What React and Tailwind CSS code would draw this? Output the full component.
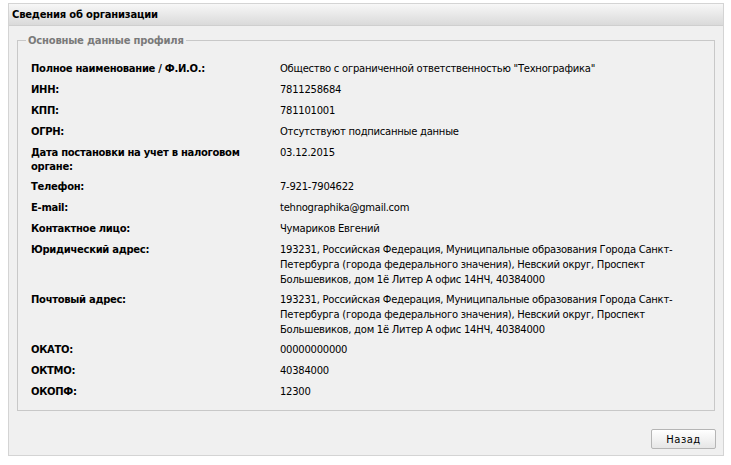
export default function App() {
  const rows = [
    ["Полное наименование / Ф.И.О.:", ["Общество с ограниченной ответственностью \"Технографика\""]],
    ["ИНН:", ["7811258684"]],
    ["КПП:", ["781101001"]],
    ["ОГРН:", ["Отсутствуют подписанные данные"]],
    ["Дата постановки на учет в налоговом органе:", ["03.12.2015"]],
    ["Телефон:", ["7-921-7904622"]],
    ["E-mail:", ["tehnographika@gmail.com"]],
    ["Контактное лицо:", ["Чумариков Евгений"]],
    ["Юридический адрес:", ["193231, Российская Федерация, Муниципальные образования Города Санкт-", "Петербурга (города федерального значения), Невский округ, Проспект", "Большевиков, дом 1ё Литер А офис 14НЧ, 40384000"]],
    ["Почтовый адрес:", ["193231, Российская Федерация, Муниципальные образования Города Санкт-", "Петербурга (города федерального значения), Невский округ, Проспект", "Большевиков, дом 1ё Литер А офис 14НЧ, 40384000"]],
    ["ОКАТО:", ["00000000000"]],
    ["ОКТМО:", ["40384000"]],
    ["ОКОПФ:", ["12300"]],
  ];
  return (
    <div className="w-[731px] h-[465px] bg-white pt-[3px] pl-[8px]" style={{ fontFamily: '"DejaVu Sans", Verdana, sans-serif' }}>
      <div className="w-[716px] h-[453px] border border-[#d4d4d4] bg-[#f0f0f0] flex flex-col">
        <div className="h-[22px] bg-gradient-to-b from-[#f7f7f7] to-[#dadada] border-b border-[#cfcfcf] flex items-center pl-[3px] text-[10px] font-bold text-black tracking-[-0.2px]">
          Сведения об организации
        </div>
        <div className="px-[8px] pt-[7px]">
          <fieldset className="border border-[#c8c8c8] h-[378px] pl-[13px] pr-[10px] pt-[10px] m-0">
            <legend className="ml-[-5px] px-[2px] text-[10px] font-bold text-[#7a7a7a] tracking-[-0.2px]">Основные данные профиля</legend>
            <div className="flex flex-col">
              {rows.map(([label, vals], i) => {
                const pb = i === 4 || vals.length > 1 ? "pb-[2px]" : "pb-[3px]";
                return (
                  <div key={i} className={"flex pt-[3px] " + pb}>
                    <div className="w-[249px] shrink-0 text-[10px] font-bold leading-[14px] pt-[1px] pr-[10px] tracking-[-0.3px] text-black">{label}</div>
                    <div className="text-[10px] leading-[15px] text-black tracking-[-0.25px]">
                      {vals.map((v, j) => (<div key={j} className="whitespace-nowrap">{v}</div>))}
                    </div>
                  </div>
                );
              })}
            </div>
          </fieldset>
        </div>
        <div className="flex justify-end pr-[7px] pt-[18px]">
          <button className="w-[65px] h-[20px] border border-[#b5b5b5] rounded-[2px] bg-gradient-to-b from-[#ffffff] to-[#e6e6e6] text-[10px] text-black tracking-[0.5px]">Назад</button>
        </div>
      </div>
    </div>
  );
}
